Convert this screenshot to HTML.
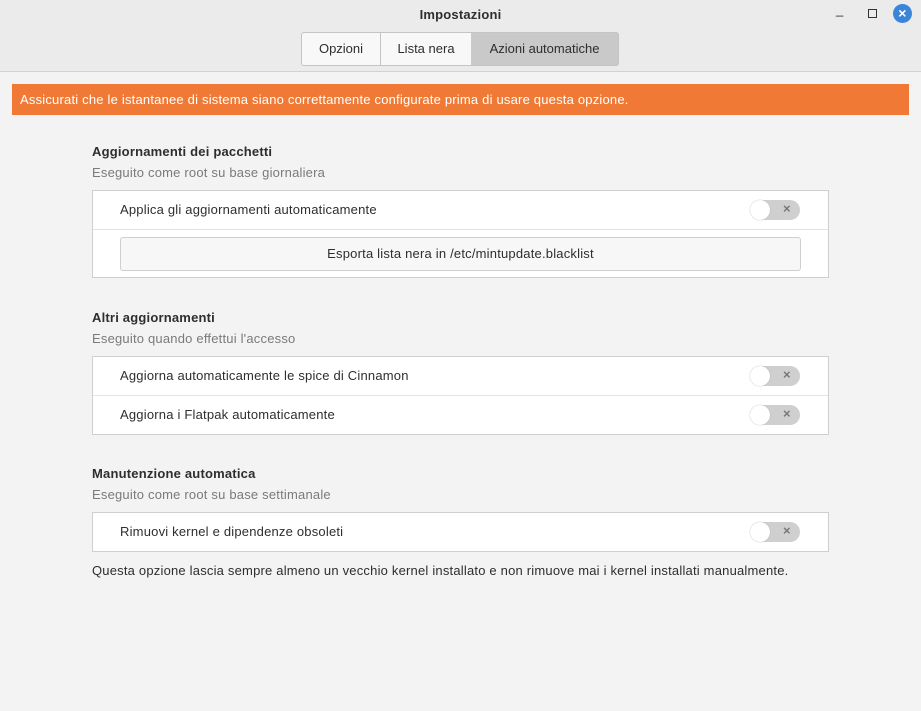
<!DOCTYPE html><html><head><style>
body{margin:0;width:921px;height:711px;background:#f3f3f3;font-family:"Liberation Sans",sans-serif;font-size:13px;letter-spacing:0.2px;color:#2e2e2e;position:relative;overflow:hidden}
.a{position:absolute}
.hdr{left:0;top:0;width:921px;height:71px;background:#ebebeb;border-bottom:1px solid #d2d2d2}
.tab{top:32px;height:32px;line-height:32px;text-align:center;border:1px solid #c4c4c4;background:#f8f8f8;letter-spacing:0}
.frame{left:92px;width:735px;background:#fff;border:1px solid #cfcfcf}
.row{position:absolute;left:0;width:735px;height:38px;line-height:38px}
.row span{position:absolute;left:27px}
.tg{position:absolute;left:657px;top:9px;width:50px;height:20px;border-radius:10px;background:#cfcfcf}
.tg:before{content:"";position:absolute;left:0;top:0;width:20px;height:20px;border-radius:50%;background:#fff;box-shadow:0 0 1px #999}
.tg:after{content:"×";position:absolute;left:33px;top:-10px;font-size:13px;color:#777;font-weight:bold}
h4{position:absolute;margin:0;font-size:13px;font-weight:bold;left:92px}
.sub{left:92px;color:#7a7a7a}
</style></head><body>
<div class="a hdr"></div>
<div class="a" style="left:0;width:921px;top:7px;text-align:center;font-weight:bold;font-size:13px">Impostazioni</div>
<div class="a" style="left:836px;top:2px;font-size:13px">_</div>
<div class="a" style="left:868px;top:9px;width:7px;height:7px;border:1.5px solid #333"></div>
<div class="a" style="left:893px;top:4px;width:19px;height:19px;border-radius:50%;background:#3a85d9;color:#fff;text-align:center;line-height:19px;font-size:14px;font-weight:bold">×</div>
<div class="a tab" style="left:301px;width:78px;border-radius:3px 0 0 3px">Opzioni</div>
<div class="a tab" style="left:380px;width:90px">Lista nera</div>
<div class="a tab" style="left:471px;width:147px;background:#c9c9c9;border-left:none;border-radius:0 3px 3px 0">Azioni automatiche</div>
<div class="a" style="left:12px;top:84px;width:897px;height:31px;background:#f07a35;color:#fff;line-height:31px"><span style="margin-left:8px">Assicurati che le istantanee di sistema siano correttamente configurate prima di usare questa opzione.</span></div>
<h4 style="top:144px">Aggiornamenti dei pacchetti</h4>
<div class="a sub" style="top:165px">Eseguito come root su base giornaliera</div>
<div class="a frame" style="top:190px;height:86px">
<div class="row" style="top:0"><span>Applica gli aggiornamenti automaticamente</span><div class="tg"></div></div>
<div class="a" style="left:0;top:38px;width:735px;border-top:1px solid #e2e2e2"></div>
<div class="a" style="left:27px;top:46px;width:679px;height:32px;line-height:32px;text-align:center;background:#f7f7f7;border:1px solid #cfcfcf;border-radius:3px">Esporta lista nera in /etc/mintupdate.blacklist</div>
</div>
<h4 style="top:310px">Altri aggiornamenti</h4>
<div class="a sub" style="top:331px">Eseguito quando effettui l'accesso</div>
<div class="a frame" style="top:356px;height:77px">
<div class="row" style="top:0"><span>Aggiorna automaticamente le spice di Cinnamon</span><div class="tg"></div></div>
<div class="a" style="left:0;top:38px;width:735px;border-top:1px solid #e2e2e2"></div>
<div class="row" style="top:39px"><span>Aggiorna i Flatpak automaticamente</span><div class="tg"></div></div>
</div>
<h4 style="top:466px">Manutenzione automatica</h4>
<div class="a sub" style="top:487px">Eseguito come root su base settimanale</div>
<div class="a frame" style="top:512px;height:38px">
<div class="row" style="top:0"><span>Rimuovi kernel e dipendenze obsoleti</span><div class="tg"></div></div>
</div>
<div class="a" style="left:92px;top:563px">Questa opzione lascia sempre almeno un vecchio kernel installato e non rimuove mai i kernel installati manualmente.</div>
</body></html>
